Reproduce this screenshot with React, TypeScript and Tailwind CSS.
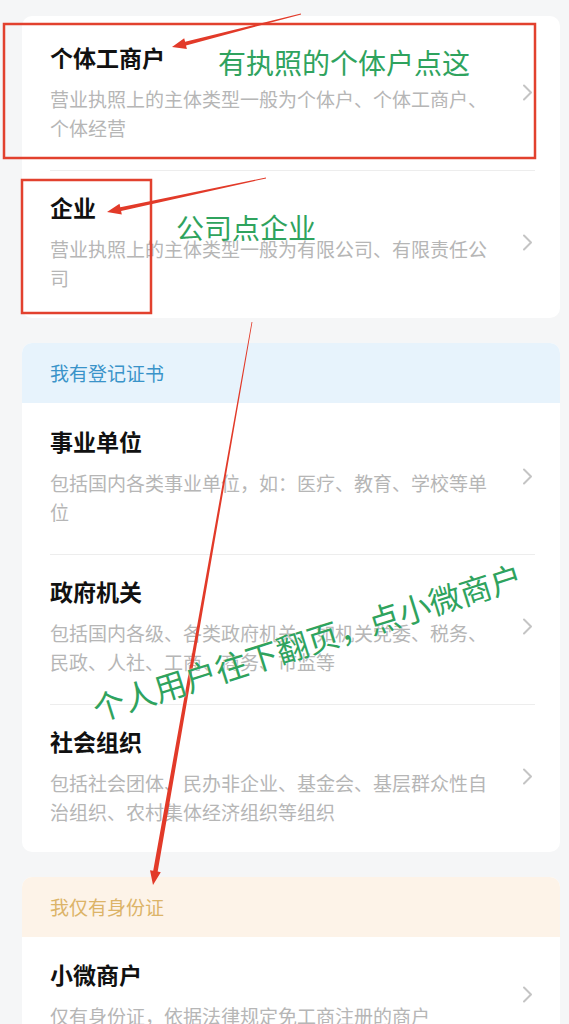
import React from 'react';

type Item = { title: string; desc: string };

const FONT = "font-['Noto_Sans_CJK_SC','Noto_Sans',sans-serif]";

function Chevron() {
  return (
    <svg width="11" height="17" viewBox="0 0 11 17" className="shrink-0">
      <path d="M2 1.5 L9 8.5 L2 15.5" fill="none" stroke="#c4c4c4" strokeWidth="2" strokeLinecap="round" strokeLinejoin="round" />
    </svg>
  );
}

function Row({ item, last, top }: { item: Item; last?: boolean; top: string }) {
  return (
    <div className="pl-[28px] pr-[25px]">
      <div
        className={`flex items-center justify-between ${top} ${
          last ? 'pb-[26px]' : 'pb-[28px] border-b border-[#ededed]'
        }`}
      >
        <div className="w-[448px]">
          <div className="text-[23px] font-bold leading-[30px] text-[#111111]">{item.title}</div>
          <div className="mt-[12px] text-[19px] leading-[29px] text-[#b6b6b6]">{item.desc}</div>
        </div>
        <div className="pr-[2px]">
          <Chevron />
        </div>
      </div>
    </div>
  );
}

// tapered arrow polygon: thin at tail, wider near the head
function arrowPoints(x1: number, y1: number, x2: number, y2: number, w0: number, w1: number, headLen: number, headW: number) {
  const dx = x2 - x1;
  const dy = y2 - y1;
  const len = Math.hypot(dx, dy);
  const ux = dx / len;
  const uy = dy / len;
  const nx = -uy;
  const ny = ux;
  const bx = x2 - ux * headLen;
  const by = y2 - uy * headLen;
  const pts = [
    [x1 + (nx * w0) / 2, y1 + (ny * w0) / 2],
    [bx + (nx * w1) / 2, by + (ny * w1) / 2],
    [bx + (nx * headW) / 2, by + (ny * headW) / 2],
    [x2, y2],
    [bx - (nx * headW) / 2, by - (ny * headW) / 2],
    [bx - (nx * w1) / 2, by - (ny * w1) / 2],
    [x1 - (nx * w0) / 2, y1 - (ny * w0) / 2],
  ];
  return pts.map((p) => `${p[0].toFixed(1)},${p[1].toFixed(1)}`).join(' ');
}

export default function App() {
  const licensed: Item[] = [
    { title: '个体工商户', desc: '营业执照上的主体类型一般为个体户、个体工商户、个体经营' },
    { title: '企业', desc: '营业执照上的主体类型一般为有限公司、有限责任公司' },
  ];
  const certified: Item[] = [
    { title: '事业单位', desc: '包括国内各类事业单位，如：医疗、教育、学校等单位' },
    { title: '政府机关', desc: '包括国内各级、各类政府机关，如机关党委、税务、民政、人社、工商、商务、市监等' },
    { title: '社会组织', desc: '包括社会团体、民办非企业、基金会、基层群众性自治组织、农村集体经济组织等组织' },
  ];
  const idOnly: Item[] = [{ title: '小微商户', desc: '仅有身份证，依据法律规定免工商注册的商户' }];

  return (
    <div className={`relative h-screen overflow-hidden bg-[#f5f6f7] ${FONT}`}>
      <div className="flex flex-col gap-[25px] pl-[22px] pr-[9px] pt-[16px]">
        {/* 有营业执照 */}
        <div className="rounded-[10px] bg-white">
          {licensed.map((it, i) => (
            <Row
              key={it.title}
              item={it}
              top={i === 0 ? 'pt-[26px]' : 'pt-[21px]'}
              last={i === licensed.length - 1}
            />
          ))}
        </div>

        {/* 我有登记证书 */}
        <div className="rounded-[10px] bg-white">
          <div className="flex h-[60px] items-center rounded-t-[10px] bg-[#e7f3fc] pl-[28px] text-[19px] text-[#3a93c9]">
            我有登记证书
          </div>
          {certified.map((it, i) => (
            <Row
              key={it.title}
              item={it}
              top={i === 0 ? 'pt-[23px]' : 'pt-[21px]'}
              last={i === certified.length - 1}
            />
          ))}
        </div>

        {/* 我仅有身份证 */}
        <div className="rounded-[10px] bg-white">
          <div className="flex h-[60px] items-center rounded-t-[10px] bg-[#fdf3e8] pl-[28px] text-[19px] text-[#dcb468]">
            我仅有身份证
          </div>
          {idOnly.map((it) => (
            <Row key={it.title} item={it} top="pt-[22px]" last />
          ))}
        </div>
      </div>

      {/* annotations */}
      <svg className="pointer-events-none absolute inset-0" width="569" height="1024" viewBox="0 0 569 1024">
        <rect x="4" y="24" width="531" height="134" fill="none" stroke="#e2412e" strokeWidth="2.5" />
        <rect x="22" y="180" width="129" height="133" fill="none" stroke="#e2412e" strokeWidth="2.5" />
        <polygon points={arrowPoints(301, 14, 172, 47, 0.8, 3.8, 14, 11)} fill="#e23a29" />
        <polygon points={arrowPoints(266, 178, 107, 212, 0.8, 3.8, 14, 11)} fill="#e23a29" />
        <polygon points={arrowPoints(252, 322, 153, 885, 0.8, 4.6, 14, 11)} fill="#e23a29" />
      </svg>

      <div className="pointer-events-none absolute left-[218px] top-[43px] text-[28px] leading-[38px] text-[#2fa35e] whitespace-nowrap">
        有执照的个体户点这
      </div>
      <div className="pointer-events-none absolute left-[176px] top-[208px] text-[28px] leading-[38px] text-[#2fa35e] whitespace-nowrap">
        公司点企业
      </div>
      <div className="pointer-events-none absolute left-[307px] top-[641px] -translate-x-1/2 -translate-y-1/2 -rotate-[17.5deg] whitespace-nowrap text-[32px] leading-[40px] text-[#2fa35e] [text-shadow:0_0_2px_#ffffff]">
        个人用户往下翻页，点小微商户
      </div>
    </div>
  );
}
